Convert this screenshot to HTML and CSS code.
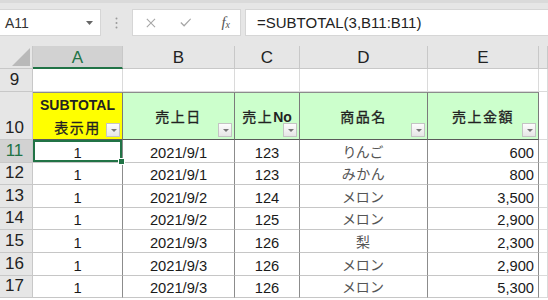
FILE: index.html
```html
<!DOCTYPE html>
<html>
<head>
  <title>SUBTOTAL</title>
  <link rel="stylesheet" href="styles.css">
</head>
<body>
  <div class="toolbar">
    <div class="namebox">
      <span>A11</span>
      <svg class="nb-arrow" width="7" height="4" viewBox="0 0 7 4"><path d="M0 0h7L3.5 4z" fill="#666"/></svg>
    </div>
    <div class="grip">
      <svg width="3" height="12" viewBox="0 0 3 12"><circle cx="1.5" cy="1.5" r="1" fill="#9a9a9a"/><circle cx="1.5" cy="6" r="1" fill="#9a9a9a"/><circle cx="1.5" cy="10.5" r="1" fill="#9a9a9a"/></svg>
    </div>
    <div class="fxbtns">
      <svg width="12" height="12" viewBox="0 0 12 12"><path d="M1 1l10 10M11 1L1 11" stroke="#a6a6a6" stroke-width="1.3" fill="none"/></svg>
      <svg width="14" height="11" viewBox="0 0 14 11"><path d="M1 5.5l4 4L13 1" stroke="#a6a6a6" stroke-width="1.5" fill="none"/></svg>
      <span class="fx">f<sub>x</sub></span>
    </div>
    <div class="formula">=SUBTOTAL(3,B11:B11)</div>
  </div>

  <div class="sheet">
    <div class="corner"><span class="tri"></span></div>
    <div class="ch ch-sel">A</div>
    <div class="ch">B</div>
    <div class="ch">C</div>
    <div class="ch">D</div>
    <div class="ch">E</div>
    <div class="ch"></div>

    <div class="rh">9</div>
    <div class="c"></div><div class="c"></div><div class="c"></div><div class="c"></div><div class="c"></div><div class="c"></div>

    <div class="rh">10</div>
    <div class="th th-yellow"><span>SUBTOTAL<br><span class="jp">表示用</span></span><i class="flt"></i></div>
    <div class="th"><span class="jp">売上日</span><i class="flt"></i></div>
    <div class="th"><span><span class="jp">売上</span>No</span><i class="flt"></i></div>
    <div class="th"><span class="jp">商品名</span><i class="flt"></i></div>
    <div class="th"><span class="jp">売上金額</span><i class="flt"></i></div>
    <div class="c"></div>

    <div class="rh rh-sel">11</div>
    <div class="td ctr sel">1</div><div class="td ctr">2021/9/1</div><div class="td ctr">123</div><div class="td ctr jpd">りんご</div><div class="td num">600</div><div class="c"></div>

    <div class="rh">12</div>
    <div class="td ctr">1</div><div class="td ctr">2021/9/1</div><div class="td ctr">123</div><div class="td ctr jpd">みかん</div><div class="td num">800</div><div class="c"></div>

    <div class="rh">13</div>
    <div class="td ctr">1</div><div class="td ctr">2021/9/2</div><div class="td ctr">124</div><div class="td ctr jpd">メロン</div><div class="td num">3,500</div><div class="c"></div>

    <div class="rh">14</div>
    <div class="td ctr">1</div><div class="td ctr">2021/9/2</div><div class="td ctr">125</div><div class="td ctr jpd">メロン</div><div class="td num">2,900</div><div class="c"></div>

    <div class="rh">15</div>
    <div class="td ctr">1</div><div class="td ctr">2021/9/3</div><div class="td ctr">126</div><div class="td ctr jpd">梨</div><div class="td num">2,300</div><div class="c"></div>

    <div class="rh">16</div>
    <div class="td ctr">1</div><div class="td ctr">2021/9/3</div><div class="td ctr">126</div><div class="td ctr jpd">メロン</div><div class="td num">2,900</div><div class="c"></div>

    <div class="rh">17</div>
    <div class="td ctr">1</div><div class="td ctr">2021/9/3</div><div class="td ctr">126</div><div class="td ctr jpd">メロン</div><div class="td num">5,300</div><div class="c"></div>
  </div>
</body>
</html>
```

FILE: styles.css
```css
body {
  margin: 0;
  font-family: 'Liberation Sans', Arial, 'Noto Sans CJK JP', sans-serif;
  color: #222;
  background: #fff;
  width: 548px;
  height: 300px;
  overflow: hidden;
}
.toolbar {
  height: 46px;
  box-sizing: border-box;
  padding-top: 9px;
  background: #e6e6e6;
  border-top: 3px solid #dadada;
  display: flex;
  align-items: flex-start;
}
.toolbar > div {
  height: 27px;
  box-sizing: border-box;
}
.namebox {
  width: 101px;
  background: #fff;
  border: 1px solid #d6d6d6;
  border-left: none;
  display: flex;
  align-items: center;
  justify-content: space-between;
  padding: 0 7px 0 5px;
  font-size: 14px;
  color: #333;
  margin-top: -3px;
}
.grip {
  width: 31px;
  display: flex;
  align-items: center;
  justify-content: center;
  margin-top: -3px;
}
.fxbtns {
  width: 109px;
  background: #fff;
  border: 1px solid #d6d6d6;
  display: flex;
  align-items: center;
  padding: 0 10px 0 13px;
  gap: 24px;
  margin-top: -3px;
}
.fx {
  font-family: 'Liberation Serif', serif;
  font-style: italic;
  font-size: 15px;
  color: #555;
  margin-left: 6px;
}
.fx sub {
  font-size: 10px;
  vertical-align: -1px;
}
.formula {
  flex-grow: 1;
  margin-left: 4px;
  background: #fff;
  border: 1px solid #d6d6d6;
  border-right: none;
  padding: 0 0 0 11px;
  font-size: 15px;
  line-height: 25px;
  color: #222;
  margin-top: -3px;
}

.sheet {
  display: grid;
  grid-template-columns: 33px 90px 112px 65px 128px 111px 9px;
  grid-template-rows: 23px 23px 48px repeat(7, 22.6px);
}
.sheet > div {
  box-sizing: border-box;
  position: relative;
}
.corner {
  background: #e6e6e6;
  border-right: 1px solid #c8c8c8;
  border-bottom: 1px solid #c8c8c8;
}
.tri {
  position: absolute;
  right: 2px;
  bottom: 2px;
  width: 0;
  height: 0;
  border-left: 18px solid transparent;
  border-bottom: 18px solid #b9b9b9;
}
.ch {
  background: #e6e6e6;
  border-right: 1px solid #c8c8c8;
  border-bottom: 1px solid #c8c8c8;
  font-size: 17px;
  text-align: center;
  line-height: 24px;
  color: #222;
}
.ch-sel {
  background: #d2d2d2;
  color: #217346;
  border-bottom: 2px solid #217346;
}
.rh {
  background: #e6e6e6;
  border-right: 1px solid #c8c8c8;
  border-bottom: 1px solid #c8c8c8;
  font-size: 17px;
  display: flex;
  align-items: flex-end;
  justify-content: center;
  padding: 0 3px 1px 0;
  color: #222;
}
.rh-sel {
  background: #d2d2d2;
  color: #217346;
}
.c {
  border-right: 1px solid #dadada;
  border-bottom: 1px solid #dadada;
}
.th {
  background: #ccffcc;
  border-top: 1px solid #8c8c8c;
  border-right: 1px solid #7a7a7a;
  border-bottom: 1px solid #5a5a5a;
  display: flex;
  align-items: center;
  justify-content: center;
  text-align: center;
  font-size: 14px;
  font-weight: bold;
  line-height: 22px;
  color: #222;
}
.th-yellow {
  background: #ffff00;
  padding-top: 1px;
}
.th .jp {
  font-family: 'Noto Sans CJK JP', sans-serif;
  font-weight: normal;
  letter-spacing: 1.5px;
  -webkit-text-stroke: 0.3px #222;
}
.flt {
  position: absolute;
  right: 2px;
  bottom: 2px;
  width: 14px;
  height: 14px;
  box-sizing: border-box;
  border: 1px solid #c4c4c4;
  background: linear-gradient(#fdfdfd, #e6e6e6);
}
.flt::after {
  content: '';
  position: absolute;
  left: 4px;
  top: 5px;
  border-left: 3px solid transparent;
  border-right: 3px solid transparent;
  border-top: 3px solid #777;
}
.td {
  border-right: 1px solid #8c8c8c;
  border-bottom: 1px solid #c6c6c6;
  font-size: 14.7px;
  display: flex;
  align-items: flex-end;
  padding-bottom: 1px;
  color: #1a1a1a;
}
.ctr {
  justify-content: center;
}
.num {
  justify-content: flex-end;
  padding-right: 4px;
}
.jpd {
  font-family: 'Noto Sans CJK JP', sans-serif;
  font-feature-settings: 'palt';
  font-size: 14px;
  color: #555;
  letter-spacing: 1px;
}
.sel {
  box-shadow: inset 0 0 0 2px #217346;
}
.sel::after {
  content: '';
  position: absolute;
  right: -3px;
  bottom: -3px;
  width: 5px;
  height: 5px;
  background: #217346;
  border: 1px solid #fff;
  z-index: 2;
}
```
